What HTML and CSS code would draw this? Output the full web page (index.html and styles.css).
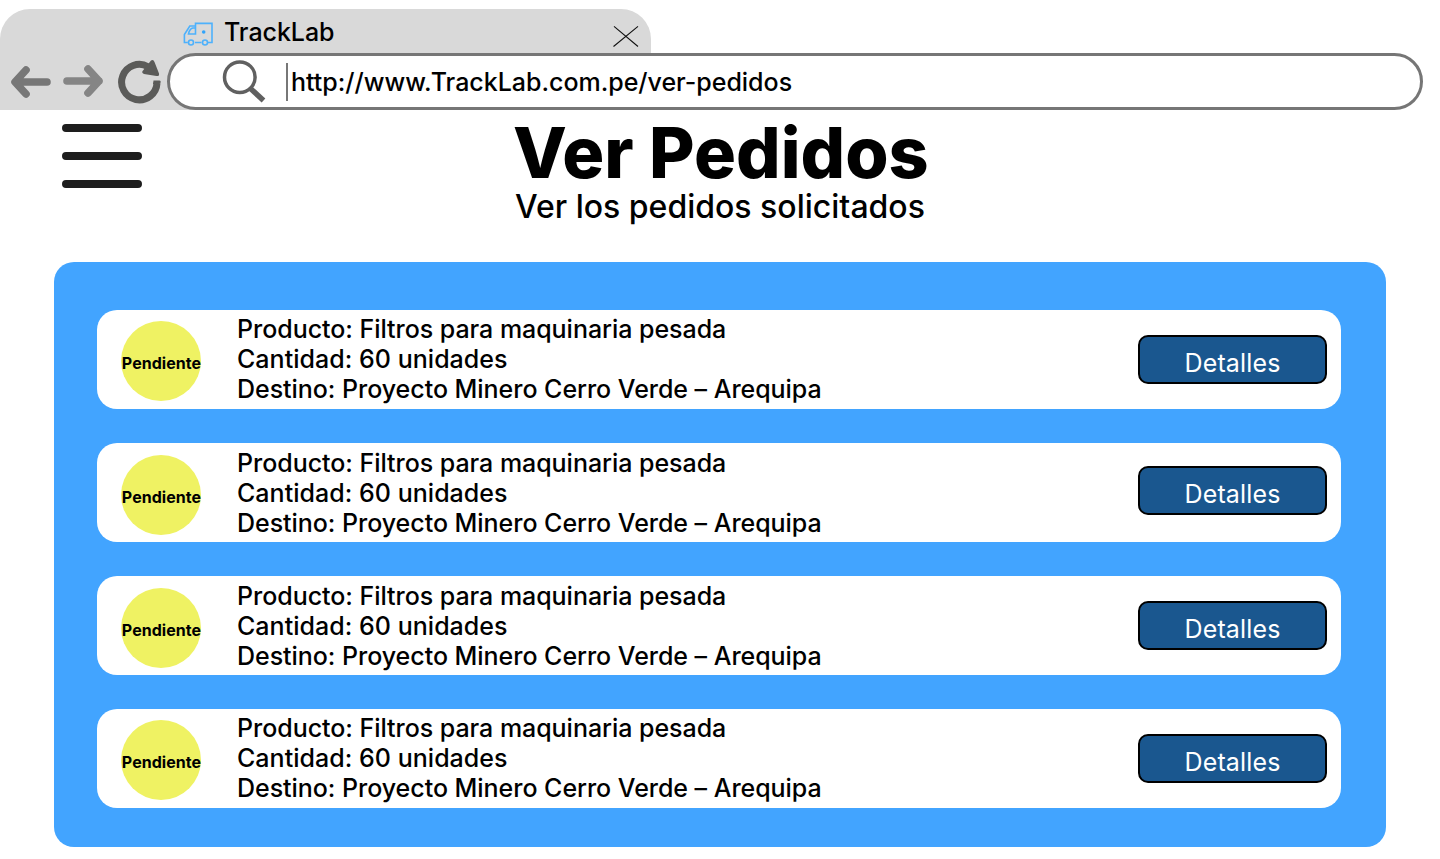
FILE: index.html
```html
<!DOCTYPE html>
<html lang="es">
<head>
<meta charset="utf-8">
<title>TrackLab - Ver Pedidos</title>
<link rel="stylesheet" href="styles.css">
</head>
<body>
<header class="browser">
  <div class="tab">
    <svg class="van" width="32" height="26" viewBox="0 0 32 26" fill="none" stroke="#4db1fc" stroke-width="1.6">
      <path d="M5.800 21.500H2.400V13.500L7.800 5H13.500V2.400H30V21.500H26M13 21.500H19.500M13.500 5V13H6.500C7 10.300 8.500 7.600 10.800 7H13.500"/>
      <circle cx="9" cy="21.500" r="2.500"/><circle cx="23" cy="21.500" r="2.500"/>
      <circle cx="21.700" cy="11" r="1.800" fill="#32a4fa" stroke="none"/>
    </svg>
    <span class="tab-title">TrackLab</span>
    <svg class="close" width="28" height="24" viewBox="0 0 28 24" stroke="#111" stroke-width="1.100"><path d="M2 2.300L26 22.500M26 2.300L1.500 22.500"/></svg>
  </div>
  <div class="toolbar">
    <nav class="nav">
      <svg class="back" width="42" height="34" viewBox="0 0 42 34" fill="none" stroke="#777" stroke-width="7.600" stroke-linecap="round" stroke-linejoin="round"><path d="M16 5L5 17L16 29M5.500 17H37"/></svg>
      <svg class="forward" width="42" height="34" viewBox="0 0 42 34" fill="none" stroke="#858585" stroke-width="7.600" stroke-linecap="round" stroke-linejoin="round"><path d="M26 5L37 17L26 29M37 17H5"/></svg>
      <svg class="reload" width="44" height="46" viewBox="0 0 44 46" fill="none"><path d="M30 8.700A17.700 17.700 0 1 0 39 25" stroke="#5b5b59" stroke-width="7"/><path d="M35.500 22.600H41.500Q43 22.600 42.700 24.500L41 26H35Z" fill="#5b5b59"/><path d="M33 2.500Q35.500 1.200 36.500 4L41 15.500Q41.500 18.500 38.500 18L26 16Q23 14.500 25 12.500Z" fill="#5b5b59"/></svg>
    </nav>
    <div class="address">
      <svg class="search" width="46" height="46" viewBox="0 0 46 46" fill="none" stroke="#606060"><circle cx="18.800" cy="20.200" r="15.300" stroke-width="3.500"/><path d="M29.500 31.500L42.500 43.500" stroke-width="5.400"/></svg>
      <span class="caret"></span>
      <span class="url">http://www.TrackLab.com.pe/ver-pedidos</span>
    </div>
  </div>
</header>
<div class="heading">
  <svg class="menu" width="80" height="64" viewBox="0 0 80 64" stroke="#1e1e1e" stroke-width="8" stroke-linecap="round"><path d="M4 4H76M4 32H76M4 60H76"/></svg>
  <div class="titles">
    <h1 class="title">Ver Pedidos</h1>
    <p class="subtitle">Ver los pedidos solicitados</p>
  </div>
</div>
<main class="orders">
  <article class="order order-first">
    <div class="status">Pendiente</div>
    <div class="info"><p>Producto: Filtros para maquinaria pesada</p><p class="quantity">Cantidad: 60 unidades</p><p>Destino: Proyecto Minero Cerro Verde – Arequipa</p></div>
    <button class="details">Detalles</button>
  </article>
  <article class="order order-second">
    <div class="status">Pendiente</div>
    <div class="info"><p>Producto: Filtros para maquinaria pesada</p><p class="quantity">Cantidad: 60 unidades</p><p>Destino: Proyecto Minero Cerro Verde – Arequipa</p></div>
    <button class="details">Detalles</button>
  </article>
  <article class="order order-third">
    <div class="status">Pendiente</div>
    <div class="info"><p>Producto: Filtros para maquinaria pesada</p><p class="quantity">Cantidad: 60 unidades</p><p>Destino: Proyecto Minero Cerro Verde – Arequipa</p></div>
    <button class="details">Detalles</button>
  </article>
  <article class="order order-fourth">
    <div class="status">Pendiente</div>
    <div class="info"><p>Producto: Filtros para maquinaria pesada</p><p class="quantity">Cantidad: 60 unidades</p><p>Destino: Proyecto Minero Cerro Verde – Arequipa</p></div>
    <button class="details">Detalles</button>
  </article>
</main>
</body>
</html>
```
FILE: styles.css
```css
* { box-sizing: border-box; margin: 0; padding: 0; }
body { width: 1440px; height: 859px; overflow: hidden; background: #fff; color: #000; font-family: Inter, "Liberation Sans", sans-serif; }
svg { display: block; flex: none; }
.browser { padding-top: 9px; height: 110px; background: linear-gradient(#d9d9d9, #d9d9d9) 0 44px / 400px 66px no-repeat; }
.tab { width: 651px; height: 44px; background: #d9d9d9; border-radius: 30px 30px 0 0; display: flex; padding-left: 182px; }
.van { margin-top: 12px; }
.tab-title { margin: 8px 0 0 10px; font-size: 25px; line-height: 30px; font-weight: 500; letter-spacing: -.04px; }
.close { margin: 15px 11px 0 auto; }
.toolbar { display: flex; height: 57px; }
.nav { display: flex; flex: none; width: 167px; padding-left: 10px; }
.back { margin-top: 12px; }
.forward { margin: 11px 0 0 10px; }
.reload { margin: 5px 0 0 14px; }
.address { width: 1256px; height: 57px; border: 3px solid #767676; border-radius: 29px; background: #fff; display: flex; }
.search { margin: 1px 0 0 51px; }
.caret { width: 2px; height: 38px; margin: 7px 0 0 19px; background: #777; }
.url { margin: 11px 0 0 3px; font-size: 25px; line-height: 30px; font-weight: 500; letter-spacing: -.02px; }
.heading { height: 152px; display: flex; padding-left: 62px; }
.menu { margin-top: 14px; }
.titles { margin-left: 371px; padding-top: 8px; }
.title { font-size: 70px; line-height: 70px; font-weight: 800; }
.subtitle { margin: 1px 0 0 2px; font-size: 32px; line-height: 36px; font-weight: 500; }
.orders { width: 1332px; height: 585px; margin-left: 54px; padding: 48px 45px 0 43px; border-radius: 20px; background: #42a4ff; display: flex; flex-direction: column; gap: 34px; }
.order { height: 99px; flex: none; border-radius: 20px; background: #fff; display: flex; padding: 0 14px 0 24px; }
.status { width: 80px; height: 80px; margin-top: 11px; border-radius: 50%; background: #eff263; display: flex; justify-content: center; font-size: 16px; line-height: 20px; font-weight: 700; padding: 32px 0 0 1px; letter-spacing: .05px; }
.info { margin: 4px 0 0 36px; font-size: 25px; line-height: 30px; font-weight: 500; white-space: nowrap; letter-spacing: -.04px; }
.quantity { letter-spacing: .03px; }
.details { width: 189px; height: 49px; margin: 25px 0 0 auto; padding-top: 6px; border: 2px solid #000; border-radius: 10px; background: #1a578f; color: #fff; font: 400 25px/30px Inter, sans-serif; letter-spacing: .15px; }
.order-second .status, .order-third .status { margin-top: 12px; }
.order-second .info, .order-third .info { margin-top: 5px; }
.order-second .details { margin-top: 23px; }
```
